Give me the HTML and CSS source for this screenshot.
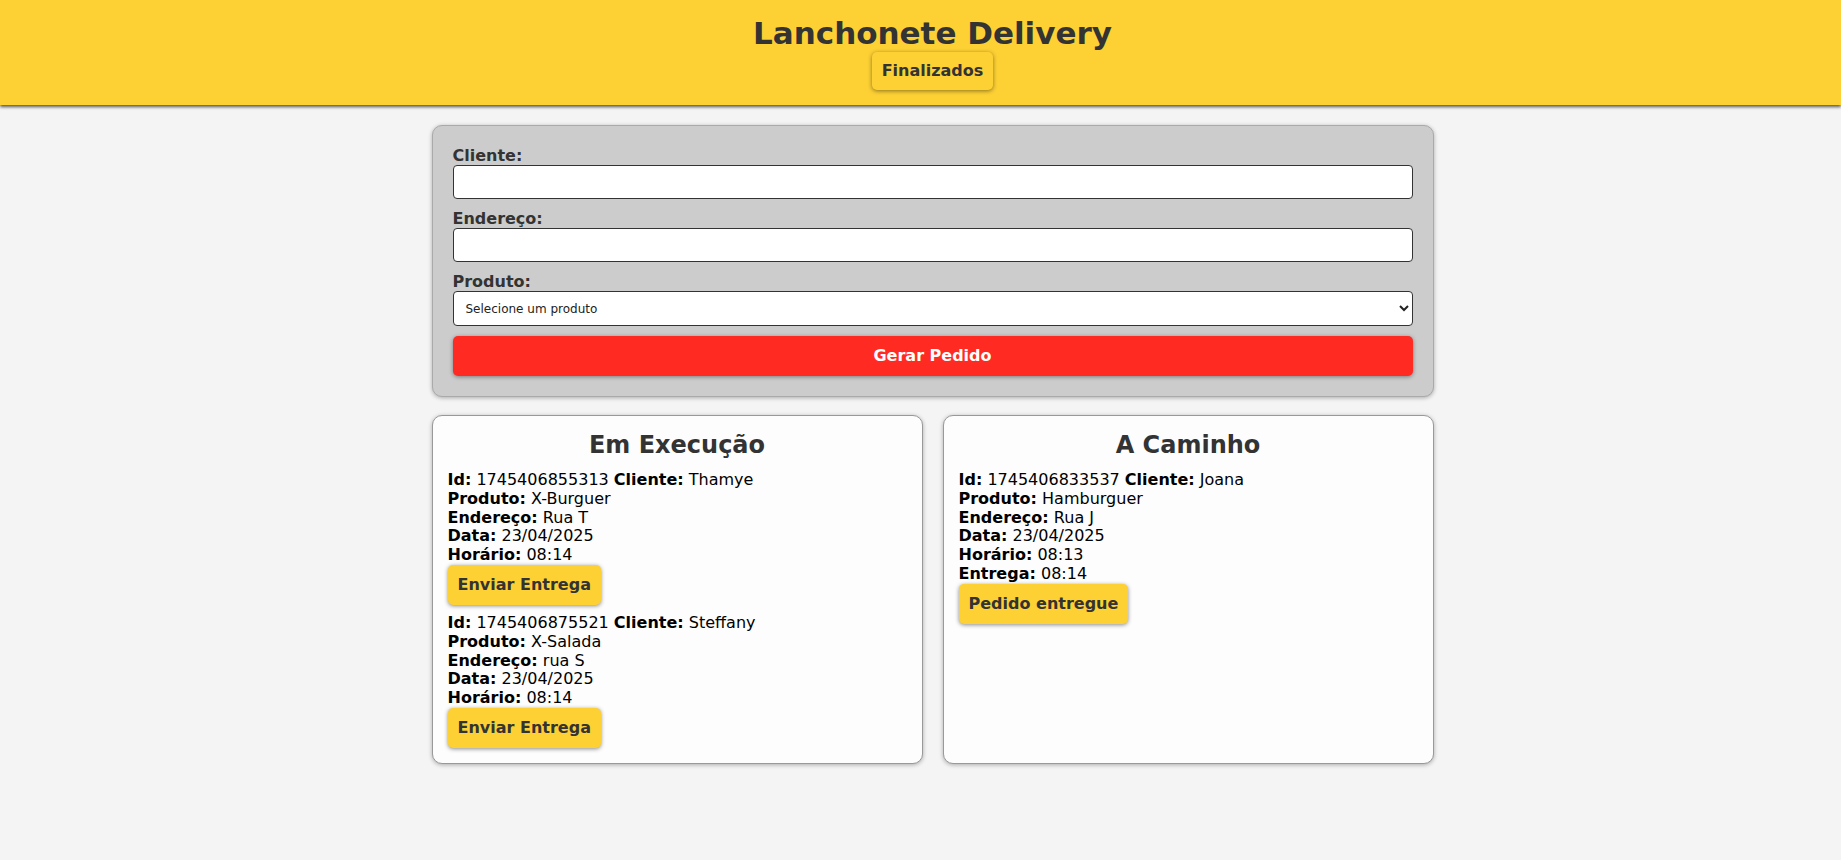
FILE: index.html
```html
<!DOCTYPE html>
<html lang="pt-BR">
<head>
<meta charset="utf-8">
<title>Lanchonete Delivery</title>
<link rel="stylesheet" href="styles.css">
</head>
<body>
<header class="topbar">
  <h1 class="topbar-title">Lanchonete Delivery</h1>
  <button class="btn btn-yellow">Finalizados</button>
</header>
<main class="page">
  <form class="order-form">
    <label class="field-label" for="cliente">Cliente:</label>
    <input class="field-input" id="cliente" type="text">
    <label class="field-label" for="endereco">Endereço:</label>
    <input class="field-input" id="endereco" type="text">
    <label class="field-label" for="produto">Produto:</label>
    <select class="field-select" id="produto">
      <option>Selecione um produto</option>
    </select>
    <button type="button" class="btn btn-red">Gerar Pedido</button>
  </form>
  <section class="columns">
    <div class="column-card">
      <h2 class="column-title">Em Execução</h2>
      <div class="order">
        <div class="order-line"><b>Id:</b> 1745406855313 <b>Cliente:</b> Thamye</div>
        <div class="order-line"><b>Produto:</b> X-Burguer</div>
        <div class="order-line"><b>Endereço:</b> Rua T</div>
        <div class="order-line"><b>Data:</b> 23/04/2025</div>
        <div class="order-line"><b>Horário:</b> 08:14</div>
        <button class="btn btn-yellow">Enviar Entrega</button>
      </div>
      <div class="order">
        <div class="order-line"><b>Id:</b> 1745406875521 <b>Cliente:</b> Steffany</div>
        <div class="order-line"><b>Produto:</b> X-Salada</div>
        <div class="order-line"><b>Endereço:</b> rua S</div>
        <div class="order-line"><b>Data:</b> 23/04/2025</div>
        <div class="order-line"><b>Horário:</b> 08:14</div>
        <button class="btn btn-yellow">Enviar Entrega</button>
      </div>
    </div>
    <div class="column-card">
      <h2 class="column-title">A Caminho</h2>
      <div class="order">
        <div class="order-line"><b>Id:</b> 1745406833537 <b>Cliente:</b> Joana</div>
        <div class="order-line"><b>Produto:</b> Hamburguer</div>
        <div class="order-line"><b>Endereço:</b> Rua J</div>
        <div class="order-line"><b>Data:</b> 23/04/2025</div>
        <div class="order-line"><b>Horário:</b> 08:13</div>
        <div class="order-line"><b>Entrega:</b> 08:14</div>
        <button class="btn btn-yellow">Pedido entregue</button>
      </div>
    </div>
  </section>
</main>
</body>
</html>
```
FILE: styles.css
```css
* { box-sizing: border-box; }

html, body {
  margin: 0;
  padding: 0;
}

body {
  background: #f4f4f4;
  font-family: "DejaVu Sans", Verdana, sans-serif;
  color: #000;
}

.topbar {
  background: #fdd034;
  padding: 15px 0 15px 24px;
  display: flex;
  flex-direction: column;
  align-items: center;
  box-shadow: 0 2px 3px rgba(0, 0, 0, 0.65);
}

.topbar-title {
  margin: 0;
  font-size: 31px;
  line-height: 37px;
  color: #333;
  font-weight: bold;
}

.btn {
  font-family: "DejaVu Sans", Verdana, sans-serif;
  font-weight: bold;
  font-size: 16px;
  line-height: 20px;
  padding: 10px;
  border: none;
  border-radius: 5px;
  cursor: pointer;
}

.btn-yellow {
  background: #fdd034;
  color: #333;
  box-shadow: 0 1px 4px rgba(0, 0, 0, 0.45);
}

.topbar .btn-yellow {
  padding: 9px 10px;
}

.btn-red {
  background: #ff2b22;
  color: #fff;
  width: 100%;
  margin-top: 10px;
  box-shadow: 0 1px 4px rgba(0, 0, 0, 0.4);
}

.page {
  padding: 20px 0 40px 24px;
  display: flex;
  flex-direction: column;
  align-items: center;
  gap: 18px;
}

.order-form {
  width: 1002px;
  background: #ccc;
  border: 1px solid #aaa;
  border-radius: 10px;
  padding: 20px;
  display: flex;
  flex-direction: column;
  box-shadow: 0 1px 4px rgba(0, 0, 0, 0.3);
}

.field-label {
  font-weight: bold;
  font-size: 16px;
  line-height: 19px;
  color: #333;
}

.field-input {
  font-family: "DejaVu Sans", Verdana, sans-serif;
  font-size: 13px;
  line-height: 16px;
  height: 34px;
  padding: 8px;
  border: 1px solid #333;
  border-radius: 4px;
  background: #fff;
  margin-bottom: 10px;
}

.field-select {
  font-family: "DejaVu Sans", Verdana, sans-serif;
  font-size: 12px;
  height: 35px;
  padding: 0 8px;
  border: 1px solid #333;
  border-radius: 4px;
  background: #fff;
  color: #222;
}

.columns {
  width: 1002px;
  display: grid;
  grid-template-columns: 1fr 1fr;
  gap: 20px;
}

.column-card {
  background: #fdfdfd;
  border: 1px solid #999;
  border-radius: 10px;
  padding: 15px;
  display: flex;
  flex-direction: column;
  align-items: flex-start;
  gap: 9px;
  box-shadow: 0 1px 4px rgba(0, 0, 0, 0.3);
}

.column-title {
  align-self: stretch;
  text-align: center;
  margin: 0 0 3px;
  font-size: 24px;
  line-height: 28px;
  color: #333;
}

.order {
  display: flex;
  flex-direction: column;
  align-items: flex-start;
}

.order-line {
  font-size: 16px;
  line-height: 18.8px;
}
```
